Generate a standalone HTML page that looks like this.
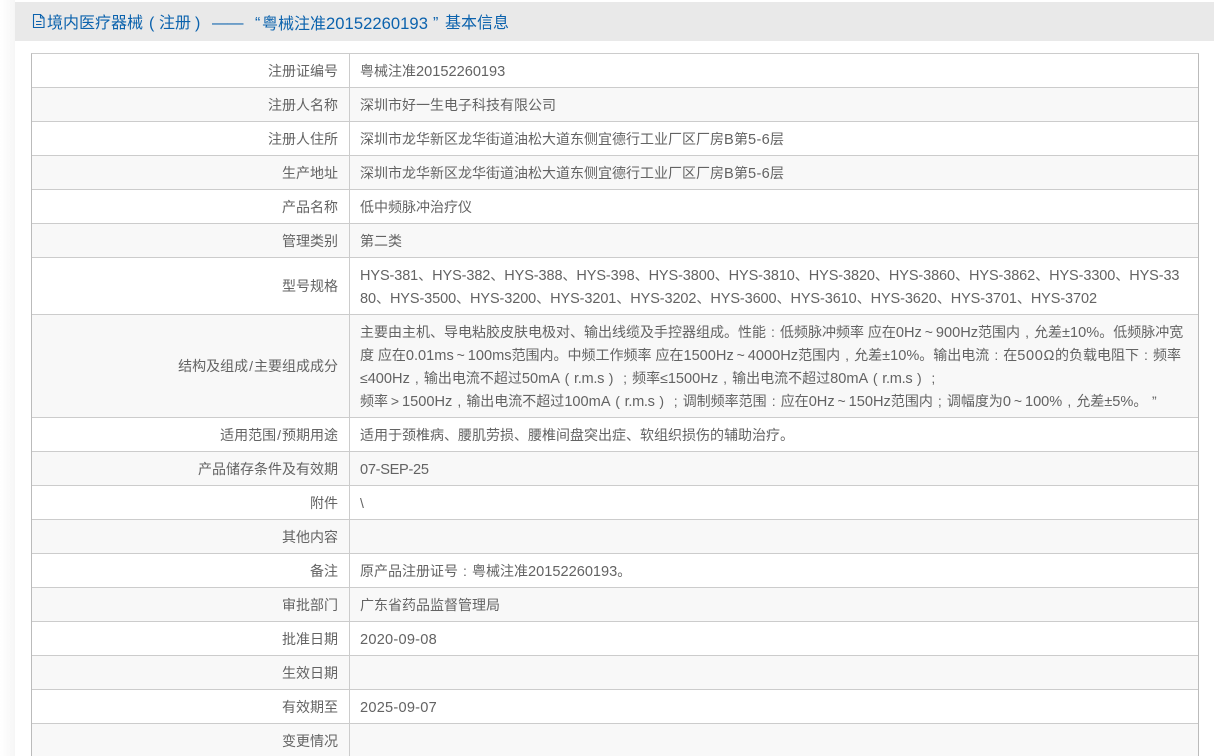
<!DOCTYPE html>
<html lang="zh-CN"><head><meta charset="utf-8"><title>基本信息</title>
<style>
html,body{margin:0;padding:0;width:1214px;height:756px;overflow:hidden;background:#fff}
body{position:relative;font-family:"Liberation Sans","Noto Sans CJK SC",sans-serif;font-size:14px;color:#636363}
.sh{position:absolute;left:0;top:0;width:15px;height:756px;background:linear-gradient(to right,#fff,#f6f6f6)}
.hd{position:absolute;left:15px;top:2px;width:1199px;height:39px;background:#e9e9e9}
.t{position:absolute;top:14px;line-height:20px;font-size:16px;color:#0b62ad;white-space:pre}
.tb{position:absolute;left:31px;top:53px;width:1168px;height:703px;border:1px solid #ccc;border-left-color:#bbb;border-right-color:#bbb;border-width:1px 1px 0 1px;box-sizing:border-box;background:#fff}
.r{position:absolute;left:32px;width:1166px;border-bottom:1px solid #ccc;box-sizing:content-box}
.r.g{background:#f8f8f8}
.v{position:absolute;left:349px;top:53px;width:1px;height:703px;background:#ccc}
.l,.x{position:absolute;line-height:23px;white-space:pre}
.l{right:876px;text-align:right}
.x{left:360px}
b{font-weight:normal;font-size:14.6px}
b.h{font-size:14.5px;letter-spacing:-.1px}
b.d{letter-spacing:.23px}
b.z{letter-spacing:-.3px}
b.s{font-size:14px;letter-spacing:1px;margin-left:1px}
b.w{letter-spacing:.3px}
i{font-style:normal;display:inline-block;width:14px;text-align:center}
</style></head><body>
<div class="sh"></div>
<div class="hd"></div>
<svg style="position:absolute;left:32px;top:13px" width="14" height="16" viewBox="0 0 14 16" fill="none" stroke="#0b62ad" stroke-width="1.100"><path d="M1.500 1.500h7l3.500 3.500v9.500h-10.500zM8.500 1.500v3.500h3.500M4 8.500h5.500M4 11.500h5.500"/></svg>
<div class="t" style="left:47px">境内医疗器械</div>
<div class="t" style="left:149px">(</div>
<div class="t" style="left:159px">注册</div>
<div class="t" style="left:195px">)</div>
<div class="t" style="left:212px;letter-spacing:-.5px">——</div>
<div class="t" style="left:255px">“</div>
<div class="t" style="left:262px">粤械注准<b style="font-size:16.6px;letter-spacing:.04px">20152260193</b></div>
<div class="t" style="left:433px">”</div>
<div class="t" style="left:445px">基本信息</div>
<div class="tb"></div>
<div class="r" style="top:54px;height:33px"></div>
<div class="r g" style="top:88px;height:33px"></div>
<div class="r" style="top:122px;height:33px"></div>
<div class="r g" style="top:156px;height:33px"></div>
<div class="r" style="top:190px;height:33px"></div>
<div class="r g" style="top:224px;height:33px"></div>
<div class="r" style="top:258px;height:56px"></div>
<div class="r g" style="top:315px;height:102px"></div>
<div class="r" style="top:418px;height:33px"></div>
<div class="r g" style="top:452px;height:33px"></div>
<div class="r" style="top:486px;height:33px"></div>
<div class="r g" style="top:520px;height:33px"></div>
<div class="r" style="top:554px;height:33px"></div>
<div class="r g" style="top:588px;height:33px"></div>
<div class="r" style="top:622px;height:33px"></div>
<div class="r g" style="top:656px;height:33px"></div>
<div class="r" style="top:690px;height:33px"></div>
<div class="r g" style="top:724px;height:32px;border-bottom:0"></div>
<div class="v"></div>

<div class="l" style="top:60px">注册证编号</div><div class="x" style="top:60px">粤械注准<b>20152260193</b></div>
<div class="l" style="top:94px">注册人名称</div><div class="x" style="top:94px">深圳市好一生电子科技有限公司</div>
<div class="l" style="top:128px">注册人住所</div><div class="x" style="top:128px">深圳市龙华新区龙华街道油松大道东侧宜德行工业厂区厂房<b class="w">B</b>第<b class="w">5-6</b>层</div>
<div class="l" style="top:162px">生产地址</div><div class="x" style="top:162px">深圳市龙华新区龙华街道油松大道东侧宜德行工业厂区厂房<b class="w">B</b>第<b class="w">5-6</b>层</div>
<div class="l" style="top:196px">产品名称</div><div class="x" style="top:196px">低中频脉冲治疗仪</div>
<div class="l" style="top:230px">管理类别</div><div class="x" style="top:230px">第二类</div>
<div class="l" style="top:275px">型号规格</div>
<div class="x" style="top:264px"><b class="h">HYS-381</b>、<b class="h">HYS-382</b>、<b class="h">HYS-388</b>、<b class="h">HYS-398</b>、<b class="h">HYS-3800</b>、<b class="h">HYS-3810</b>、<b class="h">HYS-3820</b>、<b class="h">HYS-3860</b>、<b class="h">HYS-3862</b>、<b class="h">HYS-3300</b>、<b class="h">HYS-33</b></div>
<div class="x" style="top:287px"><b class="h">80</b>、<b class="h">HYS-3500</b>、<b class="h">HYS-3200</b>、<b class="h">HYS-3201</b>、<b class="h">HYS-3202</b>、<b class="h">HYS-3600</b>、<b class="h">HYS-3610</b>、<b class="h">HYS-3620</b>、<b class="h">HYS-3701</b>、<b class="h">HYS-3702</b></div>
<div class="l" style="top:355px">结构及组成<b class="s">/</b>主要组成成分</div>
<div class="x" style="top:321px">主要由主机、导电粘胶皮肤电极对、输出线缆及手控器组成。性能<i>:</i>低频脉冲频率 应在<b>0Hz</b><i>~</i><b>900Hz</b>范围内<i>,</i>允差<b>±10%</b>。低频脉冲宽</div>
<div class="x" style="top:344px">度 应在<b>0.01ms</b><i>~</i><b>100ms</b>范围内。中频工作频率 应在<b>1500Hz</b><i>~</i><b>4000Hz</b>范围内<i>,</i>允差<b>±10%</b>。输出电流<i>:</i>在<b style="letter-spacing:.6px">500Ω</b>的负载电阻下<i>:</i>频率</div>
<div class="x" style="top:367px">≤<b>400Hz</b><i>,</i>输出电流不超过<b>50mA</b><i>(</i><b class="z">r.m.s</b><i>)</i><i>;</i>频率≤<b>1500Hz</b><i>,</i>输出电流不超过<b>80mA</b><i>(</i><b class="z">r.m.s</b><i>)</i><i>;</i></div>
<div class="x" style="top:390px">频率<i>&gt;</i><b>1500Hz</b><i>,</i>输出电流不超过<b>100mA</b><i>(</i><b class="z">r.m.s</b><i>)</i><i>;</i>调制频率范围<i>:</i>应在<b>0Hz</b><i>~</i><b>150Hz</b>范围内<i>;</i>调幅度为<b>0</b><i>~</i><b>100%</b><i>,</i>允差<b>±5%</b>。<i>”</i></div>
<div class="l" style="top:424px">适用范围<b class="s">/</b>预期用途</div><div class="x" style="top:424px">适用于颈椎病、腰肌劳损、腰椎间盘突出症、软组织损伤的辅助治疗。</div>
<div class="l" style="top:458px">产品储存条件及有效期</div><div class="x" style="top:458px"><b class="z">07-SEP-25</b></div>
<div class="l" style="top:492px">附件</div><div class="x" style="top:492px">\</div>
<div class="l" style="top:526px">其他内容</div>
<div class="l" style="top:560px">备注</div><div class="x" style="top:560px">原产品注册证号<i>:</i>粤械注准<b>20152260193</b>。</div>
<div class="l" style="top:594px">审批部门</div><div class="x" style="top:594px">广东省药品监督管理局</div>
<div class="l" style="top:628px">批准日期</div><div class="x" style="top:628px"><b class="d">2020-09-08</b></div>
<div class="l" style="top:662px">生效日期</div>
<div class="l" style="top:696px">有效期至</div><div class="x" style="top:696px"><b class="d">2025-09-07</b></div>
<div class="l" style="top:730px">变更情况</div>
</body></html>
